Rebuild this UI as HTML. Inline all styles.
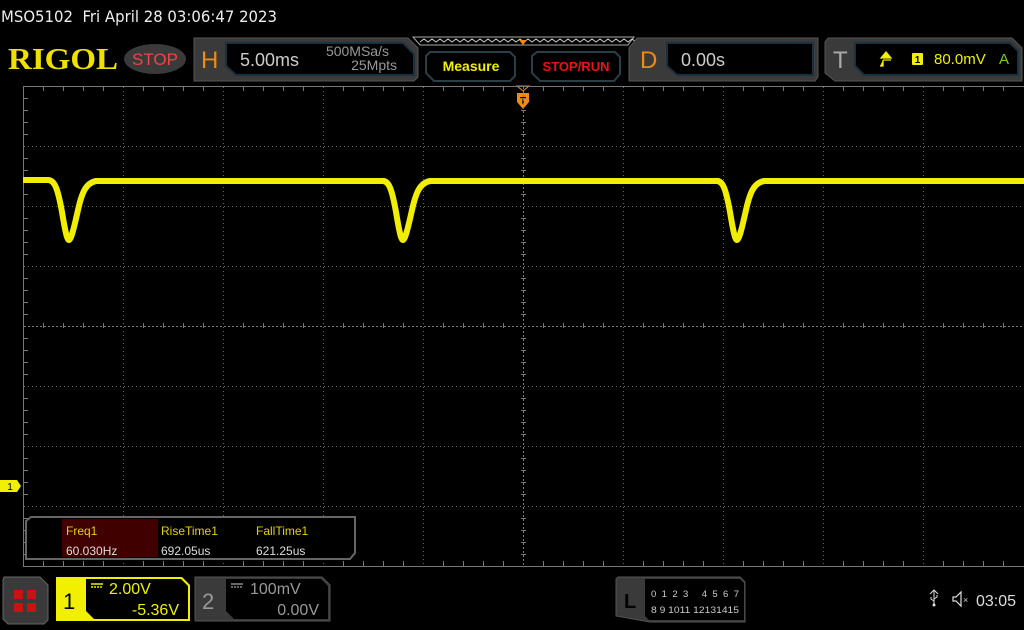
<!DOCTYPE html>
<html><head><meta charset="utf-8"><style>
html,body{margin:0;padding:0;background:#000;width:1024px;height:630px;overflow:hidden}
svg{display:block}
text{font-family:"Liberation Sans","DejaVu Sans",sans-serif}
</style></head><body>
<svg width="1024" height="630" viewBox="0 0 1024 630" xmlns="http://www.w3.org/2000/svg">
<rect width="1024" height="630" fill="#000"/>
<text x="1" y="22" fill="#eee" font-size="16" style="font-family:'DejaVu Sans',sans-serif;white-space:pre" textLength="276" lengthAdjust="spacingAndGlyphs">MSO5102  Fri April 28 03:06:47 2023</text>

<!-- RIGOL logo -->
<text x="8" y="69" fill="#f0e000" font-size="31" font-weight="bold" style="font-family:'Liberation Serif',serif" textLength="110" lengthAdjust="spacingAndGlyphs">RIGOL</text>
<ellipse cx="155" cy="59" rx="31" ry="15" fill="#3a3a3a"/>
<text x="155" y="65" fill="#ee4444" font-size="17" text-anchor="middle">STOP</text>

<!-- H box -->
<path d="M194 38 H408 L418 48 V77 L414 81 H194 Z" fill="#3a3a3a" stroke="#555"/>
<text x="201" y="68" fill="#f08a10" font-size="24">H</text>
<path d="M226 43 H403 L414 54 V75 H236 L226 66 Z" fill="#000" stroke="#1a3240" stroke-width="2"/>
<text x="240" y="66" fill="#ccc" font-size="18">5.00ms</text>
<text x="389" y="56" fill="#999" font-size="14" text-anchor="end">500MSa/s</text>
<text x="397" y="70" fill="#999" font-size="14" text-anchor="end">25Mpts</text>

<!-- memory bar -->
<path d="M413 37 H634 L628 45 H420 Z" fill="none" stroke="#aaa" stroke-width="1"/>
<path d="M420 42 l4 -3 l4 3 l4 -3 l4 3 l4 -3 l4 3 l4 -3 l4 3 l4 -3 l4 3 l4 -3 l4 3 l4 -3 l4 3 l4 -3 l4 3 l4 -3 l4 3 l4 -3 l4 3 l4 -3 l4 3 l4 -3 l4 3 l4 -3 l4 3 l4 -3 l4 3 l4 -3 l4 3 l4 -3 l4 3 l4 -3 l4 3 l4 -3 l4 3 l4 -3 l4 3 l4 -3 l4 3 l4 -3 l4 3 l4 -3 l4 3 l4 -3 l4 3 l4 -3 l4 3 l4 -3 l4 3 l4 -3 l4 3 l4 -3 l4 3" fill="none" stroke="#ccc" stroke-width="1"/>
<path d="M519 40 h8 l-4 5 z" fill="#f08a10"/>

<!-- Measure / STOP/RUN buttons -->
<path d="M430 52 H510 L515 57 V76 L510 81 H434 L426 73 V56 Z" fill="#000" stroke="#2a3e48" stroke-width="2"/>
<text x="471" y="71" fill="#f0f000" font-size="14" font-weight="bold" text-anchor="middle">Measure</text>
<path d="M537 52 H615 L620 57 V74 L614 81 H540 L532 73 V56 Z" fill="#000" stroke="#2a3e48" stroke-width="2"/>
<text x="576" y="71" fill="#ee1111" font-size="13" font-weight="bold" text-anchor="middle">STOP/RUN</text>

<!-- D box -->
<path d="M637 38 H818 V77 L815 81 H629 V48 Z" fill="#3a3a3a" stroke="#555"/>
<text x="640" y="68" fill="#f08a10" font-size="24">D</text>
<path d="M667 43 H813 V75 H677 L667 66 Z" fill="#000" stroke="#1a3240" stroke-width="2"/>
<text x="681" y="66" fill="#ccc" font-size="18">0.00s</text>

<!-- T box -->
<path d="M828 38 H1012 L1022 48 V81 H835 L825 73 V42 Z" fill="#3a3a3a" stroke="#555"/>
<text x="833" y="68" fill="#aaa" font-size="24">T</text>
<path d="M855 43 H1010 L1018 51 V75 H864 L855 66 Z" fill="#000" stroke="#1a3240" stroke-width="2"/>
<path d="M881 58 l5 -6 l5 6 z M883 60 h8 M883 60 v6 h-3" fill="#f0f000" stroke="#f0f000" stroke-width="1.3"/>
<rect x="912" y="53" width="11" height="12" rx="1" fill="#f0f000"/>
<text x="917.5" y="63" fill="#000" font-size="10" font-weight="bold" text-anchor="middle">1</text>
<text x="934" y="64" fill="#f0f000" font-size="15">80.0mV</text>
<text x="999" y="64" fill="#7ccc22" font-size="15">A</text>

<!-- Trigger position marker -->
<path d="M517 86 h12 l-6 5 z" fill="none" stroke="#f08a10"/>
<path d="M517 93 h12 v9 l-6 7 l-6 -7 z" fill="#f08a10"/>
<text x="523" y="104" fill="#000" font-size="10" font-weight="bold" text-anchor="middle">T</text>

<!-- Grid -->
<g stroke="#666" stroke-width="1" stroke-dasharray="1 3" fill="none">
<path d="M123.5 87 V566 M223.5 87 V566 M323.5 87 V566 M423.5 87 V566 M623.5 87 V566 M723.5 87 V566 M823.5 87 V566 M923.5 87 V566"/>
<path d="M24 146.5 H1024 M24 206.5 H1024 M24 266.5 H1024 M24 386.5 H1024 M24 446.5 H1024 M24 506.5 H1024"/>
</g>
<g stroke="#777" stroke-width="1" fill="none">
<path d="M523.5 87 V566 M24 326.5 H1024" stroke-dasharray="2 2"/>
<path d="M23.5 86 V566 M23 86.5 H1024 M23 566.5 H1024"/>
</g>
<g stroke="#777" stroke-width="1">
<path id="ticksH" d="M43.5 86 v5 M63.5 86 v5 M83.5 86 v5 M103.5 86 v5 M143.5 86 v5 M163.5 86 v5 M183.5 86 v5 M203.5 86 v5 M243.5 86 v5 M263.5 86 v5 M283.5 86 v5 M303.5 86 v5 M343.5 86 v5 M363.5 86 v5 M383.5 86 v5 M403.5 86 v5 M443.5 86 v5 M463.5 86 v5 M483.5 86 v5 M503.5 86 v5 M543.5 86 v5 M563.5 86 v5 M583.5 86 v5 M603.5 86 v5 M643.5 86 v5 M663.5 86 v5 M683.5 86 v5 M703.5 86 v5 M743.5 86 v5 M763.5 86 v5 M783.5 86 v5 M803.5 86 v5 M843.5 86 v5 M863.5 86 v5 M883.5 86 v5 M903.5 86 v5 M943.5 86 v5 M963.5 86 v5 M983.5 86 v5 M1003.5 86 v5"/>
<use href="#ticksH" transform="translate(0,237)"/>
<use href="#ticksH" transform="translate(0,475)"/>
<path id="ticksV" d="M23 98.5 h5 M23 110.5 h5 M23 122.5 h5 M23 134.5 h5 M23 158.5 h5 M23 170.5 h5 M23 182.5 h5 M23 194.5 h5 M23 218.5 h5 M23 230.5 h5 M23 242.5 h5 M23 254.5 h5 M23 278.5 h5 M23 290.5 h5 M23 302.5 h5 M23 314.5 h5 M23 338.5 h5 M23 350.5 h5 M23 362.5 h5 M23 374.5 h5 M23 398.5 h5 M23 410.5 h5 M23 422.5 h5 M23 434.5 h5 M23 458.5 h5 M23 470.5 h5 M23 482.5 h5 M23 494.5 h5 M23 518.5 h5 M23 530.5 h5 M23 542.5 h5 M23 554.5 h5"/>
<use href="#ticksV" transform="translate(498,0)"/>
</g>

<!-- Waveform -->
<g fill="none" stroke="#f2ee00" stroke-linejoin="round">
<path stroke-width="6" d="M23 180 H48 C55 180 58 190 62 212 C65 230 67 240 69 240 C71 240 74 228 78 210 C82 192 86 183 96 181 H382 C389 180 392 190 396 212 C399 230 401 240 403 240 C405 240 408 228 412 210 C416 192 420 183 430 181 H716 C723 180 726 190 730 212 C733 230 735 240 737 240 C739 240 742 228 746 210 C750 192 754 183 764 181 H1024"/>
</g>

<!-- Channel marker -->
<path d="M0 480 H17 L21 486 L17 492 H0 Z" fill="#f0f000"/>
<text x="10" y="490" fill="#000" font-size="10" text-anchor="middle">1</text>

<!-- Measurement box -->
<path d="M31 517 H355 V553 L350 559 H26 V521 Z" fill="#000" stroke="#666" stroke-width="2"/>
<rect x="62" y="519" width="96" height="38" fill="#400000"/>
<text x="66" y="535" fill="#e6d000" font-size="12">Freq1</text>
<text x="66" y="555" fill="#ddd" font-size="12">60.030Hz</text>
<text x="161" y="535" fill="#e6d000" font-size="12">RiseTime1</text>
<text x="161" y="555" fill="#ddd" font-size="12">692.05us</text>
<text x="256" y="535" fill="#e6d000" font-size="12">FallTime1</text>
<text x="256" y="555" fill="#ddd" font-size="12">621.25us</text>

<!-- Bottom bar -->
<path d="M4 577 H40 L48 585 V620 L44 624 H8 L3 619 V580 Z" fill="#3a3a3a" stroke="#666"/>
<rect x="14" y="590" width="9" height="9" fill="#cc1111"/><rect x="27" y="590" width="9" height="9" fill="#cc1111"/>
<rect x="14" y="603" width="9" height="9" fill="#cc1111"/><rect x="27" y="603" width="9" height="9" fill="#cc1111"/>

<path d="M56 577 H182 L190 585 V621 H56 Z" fill="#f0f000"/>
<path d="M86 579 H181 L188 586 V619 H94 L86 611 Z" fill="#000"/>
<text x="63" y="609" fill="#000" font-size="22">1</text>
<path d="M91 584 h12 M91 587 h2 M94 587 h2 M97 587 h2 M100 587 h2" stroke="#f0f000" stroke-width="1.5"/>
<text x="109" y="594" fill="#f0f000" font-size="16">2.00V</text>
<text x="179" y="615" fill="#f0f000" font-size="16" text-anchor="end">-5.36V</text>

<path d="M195 577 H322 L330 585 V621 H195 Z" fill="#3a3a3a" stroke="#555"/>
<path d="M226 579 H321 L328 586 V619 H234 L226 611 Z" fill="#000"/>
<text x="202" y="609" fill="#999" font-size="22">2</text>
<path d="M231 584 h12 M231 587 h2 M234 587 h2 M237 587 h2 M240 587 h2" stroke="#888" stroke-width="1.5"/>
<text x="250" y="594" fill="#999" font-size="16">100mV</text>
<text x="319" y="615" fill="#999" font-size="16" text-anchor="end">0.00V</text>

<path d="M618 577 H740 L745 582 V622 H650 L616 616 V579 Z" fill="#3a3a3a" stroke="#555"/>
<path d="M645 579 H740 L744 583 V620 H649 L645 616 Z" fill="#000"/>
<text x="624" y="608" fill="#000" font-size="20" font-weight="bold">L</text>
<text x="651" y="597" fill="#ccc" font-size="9.5" textLength="88" style="white-space:pre">0 1 2 3   4 5 6 7</text>
<text x="651" y="613" fill="#ccc" font-size="9.5" textLength="88" lengthAdjust="spacingAndGlyphs">8 9 1011 12131415</text>

<path d="M934 590 v14 M930 594 l4 -4 l4 4 M931 597 v2 l3 2 M937 595 v2 l-3 2" stroke="#ddd" stroke-width="1" fill="none"/>
<circle cx="934" cy="605" r="1.5" fill="#ddd"/>
<path d="M953 597 h3 l5 -5 v14 l-5 -5 h-3 z" fill="none" stroke="#ddd" stroke-width="1.2"/>
<text x="963" y="603" fill="#ccc" font-size="9">×</text>
<text x="976" y="606" fill="#ddd" font-size="16">03:05</text>
</svg>
</body></html>
